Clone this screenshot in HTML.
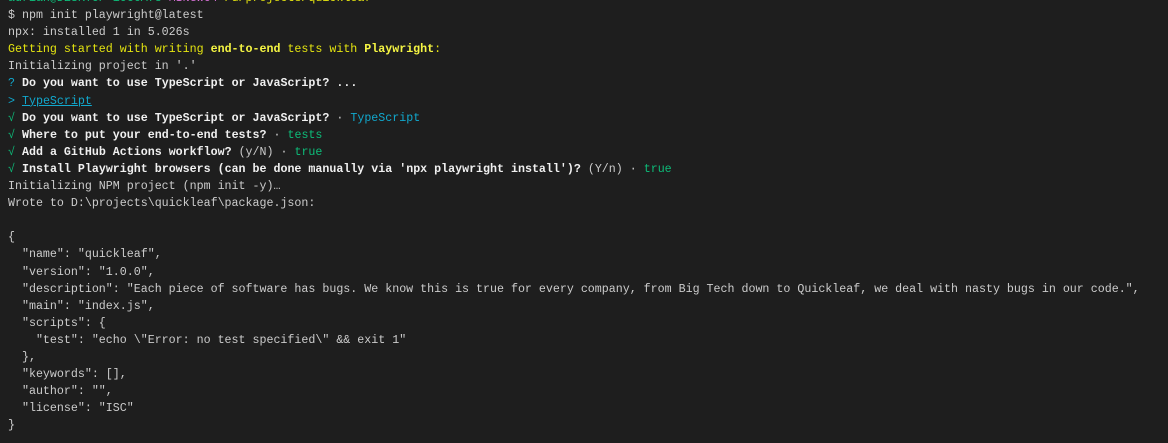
<!DOCTYPE html>
<html><head><meta charset="utf-8"><style>
html,body{margin:0;padding:0;background:#1e1e1e;width:1168px;height:443px;overflow:hidden}
pre{margin:0;position:absolute;left:8px;top:-10px;font-family:"Liberation Mono",monospace;font-size:11.65px;line-height:17.1px;color:#cccccc;white-space:pre}
.g{color:#0dbc79}.m{color:#d670d6}.y{color:#e5e510}.c{color:#11a8cd}.b{color:#f0f0f0;font-weight:bold}.yb{color:#f5f543;font-weight:bold}.u{text-decoration:underline}
</style></head><body><pre><span class="g">adrian@DESKTOP-1OC6A78</span> <span class="m">MINGW64</span> <span class="y">/d/projects/quickleaf</span>
$ npm init playwright@latest
npx: installed 1 in 5.026s
<span class="y">Getting started with writing <span class="yb">end-to-end</span> tests with <span class="yb">Playwright</span>:</span>
Initializing project in '.'
<span class="c">?</span> <span class="b">Do you want to use TypeScript or JavaScript?</span> <span class="b">...</span>
<span class="c">&gt; <span class="u">TypeScript</span></span>
<span class="g">√</span> <span class="b">Do you want to use TypeScript or JavaScript?</span> · <span class="c">TypeScript</span>
<span class="g">√</span> <span class="b">Where to put your end-to-end tests?</span> · <span class="g">tests</span>
<span class="g">√</span> <span class="b">Add a GitHub Actions workflow?</span> (y/N) · <span class="g">true</span>
<span class="g">√</span> <span class="b">Install Playwright browsers (can be done manually via 'npx playwright install')?</span> (Y/n) · <span class="g">true</span>
Initializing NPM project (npm init -y)…
Wrote to D:\projects\quickleaf\package.json:

{
  "name": "quickleaf",
  "version": "1.0.0",
  "description": "Each piece of software has bugs. We know this is true for every company, from Big Tech down to Quickleaf, we deal with nasty bugs in our code.",
  "main": "index.js",
  "scripts": {
    "test": "echo \"Error: no test specified\" &amp;&amp; exit 1"
  },
  "keywords": [],
  "author": "",
  "license": "ISC"
}
</pre></body></html>
